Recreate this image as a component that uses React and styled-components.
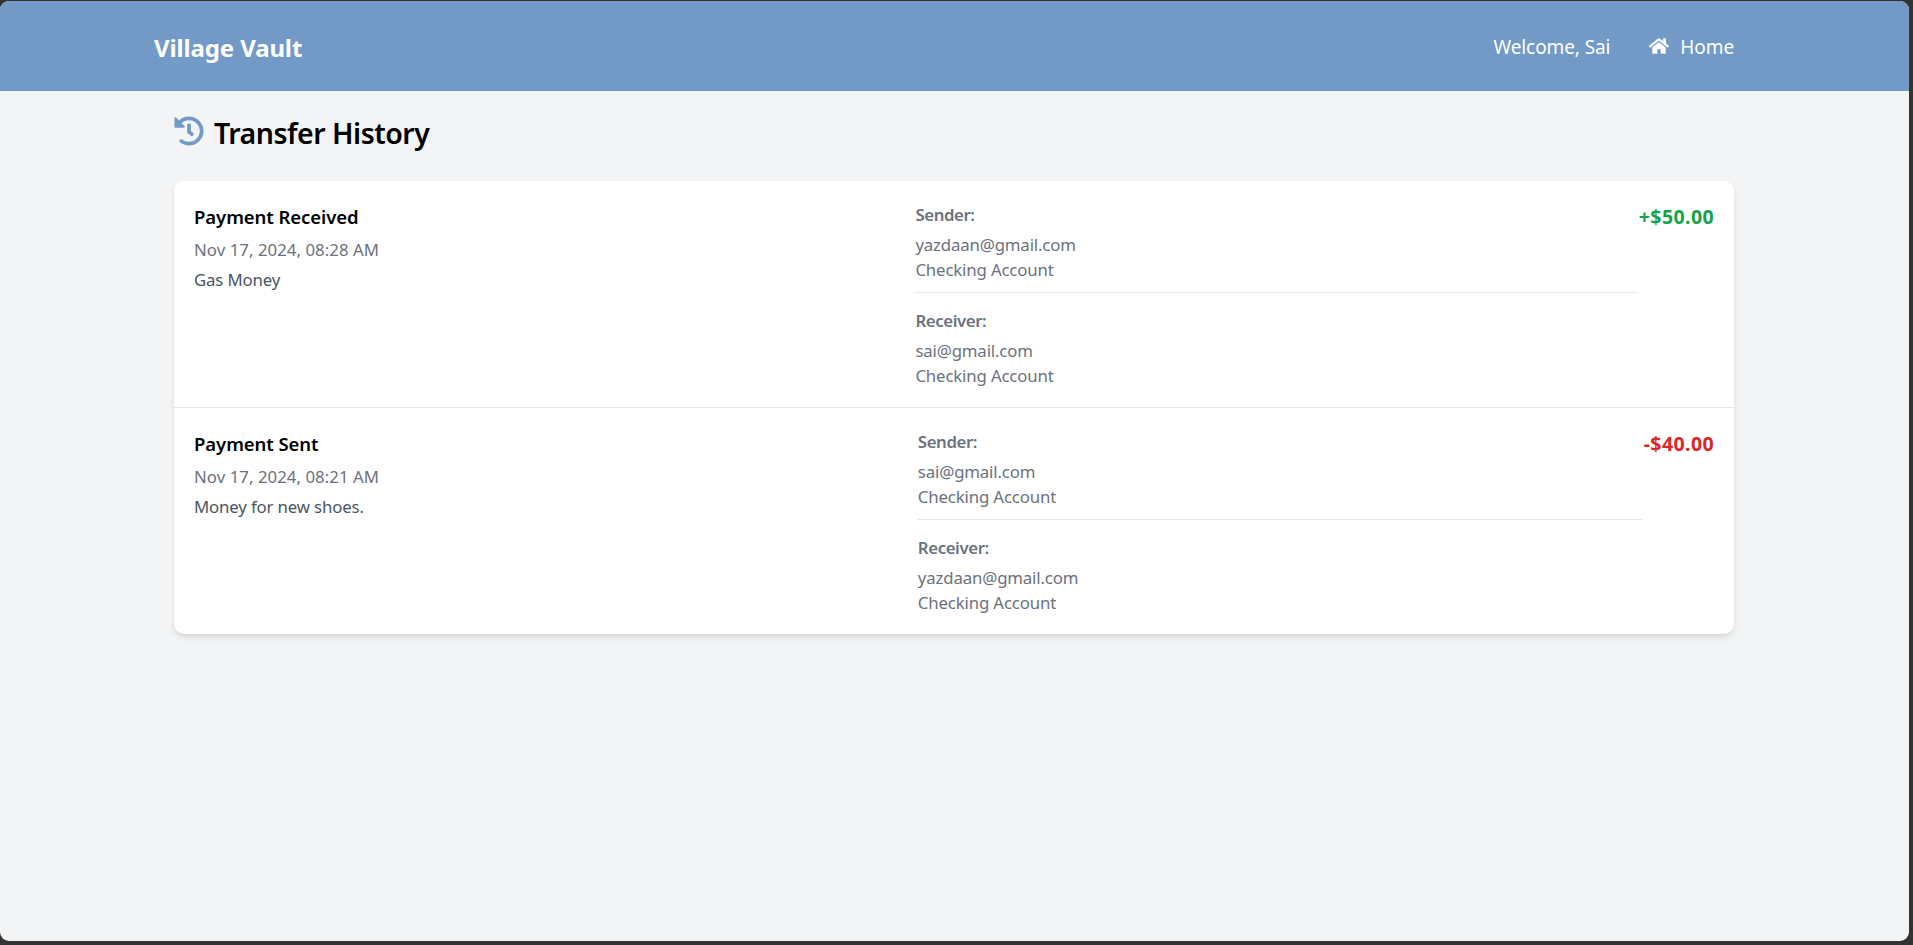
import styled, { createGlobalStyle } from 'styled-components';
import { FaHistory, FaHome } from 'react-icons/fa';

const GlobalStyle = createGlobalStyle`
  html, body {
    margin: 0;
    padding: 0;
    height: 100%;
    background: #333;
    overflow: hidden;
  }
  * { box-sizing: border-box; }
`;

const Win = styled.div`
  height: 940px;
  margin: 1px 4px 4px 0;
  border-radius: 9px;
  overflow: hidden;
  background: #f3f4f6;
  font-family: "Noto Sans", "Open Sans", sans-serif;
`;

const Navbar = styled.header`
  height: 90px;
  background: #7399c6;
  color: #fff;
  display: flex;
  align-items: center;
  justify-content: space-between;
  padding: 0 175px 0 154px;
`;

const Brand = styled.div`
  font-size: 24px;
  font-weight: 700;
  letter-spacing: -0.13px;
  margin-top: 2px;
`;

const NavRight = styled.nav`
  display: flex;
  align-items: center;
  gap: 39px;
  font-size: 19px;
  letter-spacing: -0.1px;
  margin-top: 1px;
`;

const HomeLink = styled.a`
  display: flex;
  align-items: center;
  gap: 11px;
  color: #fff;
  svg { width: 20px; height: 18px; margin-top: -2px; }
`;

const Main = styled.main`
  padding: 0 175px 0 174px;
`;

const PageTitle = styled.h1`
  margin: 0;
  height: 90px;
  padding-top: 22px;
  display: flex;
  align-items: flex-start;
  gap: 10px;
  font-size: 28.5px;
  line-height: 40px;
  font-weight: 600;
  letter-spacing: -0.5px;
  color: #000;
  svg { width: 30px; height: 30px; color: #7399c6; margin-top: 3px; }
`;

const Card = styled.section`
  background: #fff;
  border-radius: 10px;
  box-shadow: 0 4px 7px -1px rgba(0, 0, 0, 0.1), 0 2px 4px -2px rgba(0, 0, 0, 0.1);
  overflow: hidden;
`;

const Row = styled.article`
  display: flex;
  padding: 21px 20px 19px;
  & + & { border-top: 1px solid #e5e7eb; }
`;

const Info = styled.div`
  flex: 1;
`;

const RowTitle = styled.div`
  font-size: 18.5px;
  line-height: 30px;
  font-weight: 600;
  letter-spacing: -0.07px;
  color: #000;
`;

const DateText = styled.div`
  margin-top: 6px;
  font-size: 16.8px;
  line-height: 24px;
  letter-spacing: 0.05px;
  color: #6b7280;
`;

const Note = styled.div`
  margin-top: 6px;
  font-size: 16.8px;
  line-height: 24px;
  letter-spacing: -0.14px;
  color: #4b5563;
`;

const Parties = styled.div`
  flex: 1;
`;

const Party = styled.div`
  & + & {
    margin-top: 15px;
  }
  &:first-child {
    padding-bottom: 10px;
    border-bottom: 1px solid #e5e7eb;
  }
`;

const PartyLabel = styled.div`
  padding-top: 1px;
  font-size: 16.8px;
  line-height: 24px;
  font-weight: 600;
  letter-spacing: -0.4px;
  color: #6b7280;
  margin-bottom: 5px;
`;

const PartyLine = styled.div`
  font-size: 16.8px;
  line-height: 25px;
  letter-spacing: -0.15px;
  color: #6b7280;
`;

const Amount = styled.div`
  margin-left: 2px;
  font-size: 19.5px;
  line-height: 30px;
  font-weight: 700;
  letter-spacing: 0.4px;
  color: ${props => props.$positive ? '#16a34a' : '#dc2626'};
`;

const transfers = [
  {
    title: 'Payment Received',
    date: 'Nov 17, 2024, 08:28 AM',
    note: 'Gas Money',
    sender: 'yazdaan@gmail.com',
    receiver: 'sai@gmail.com',
    amount: '+$50.00',
    positive: true,
  },
  {
    title: 'Payment Sent',
    date: 'Nov 17, 2024, 08:21 AM',
    note: 'Money for new shoes.',
    sender: 'sai@gmail.com',
    receiver: 'yazdaan@gmail.com',
    amount: '-$40.00',
    positive: false,
  },
];

const App = () => {
  return (
    <Win>
      <GlobalStyle />
      <Navbar>
        <Brand>Village Vault</Brand>
        <NavRight>
          <span>Welcome, Sai</span>
          <HomeLink><FaHome /> Home</HomeLink>
        </NavRight>
      </Navbar>
      <Main>
        <PageTitle><FaHistory /> Transfer History</PageTitle>
        <Card>
          {transfers.map(t => (
            <Row key={t.title}>
              <Info>
                <RowTitle>{t.title}</RowTitle>
                <DateText>{t.date}</DateText>
                <Note>{t.note}</Note>
              </Info>
              <Parties>
                <Party>
                  <PartyLabel>Sender:</PartyLabel>
                  <PartyLine>{t.sender}</PartyLine>
                  <PartyLine>Checking Account</PartyLine>
                </Party>
                <Party>
                  <PartyLabel>Receiver:</PartyLabel>
                  <PartyLine>{t.receiver}</PartyLine>
                  <PartyLine>Checking Account</PartyLine>
                </Party>
              </Parties>
              <Amount $positive={t.positive}>{t.amount}</Amount>
            </Row>
          ))}
        </Card>
      </Main>
    </Win>
  );
};

export default App;
